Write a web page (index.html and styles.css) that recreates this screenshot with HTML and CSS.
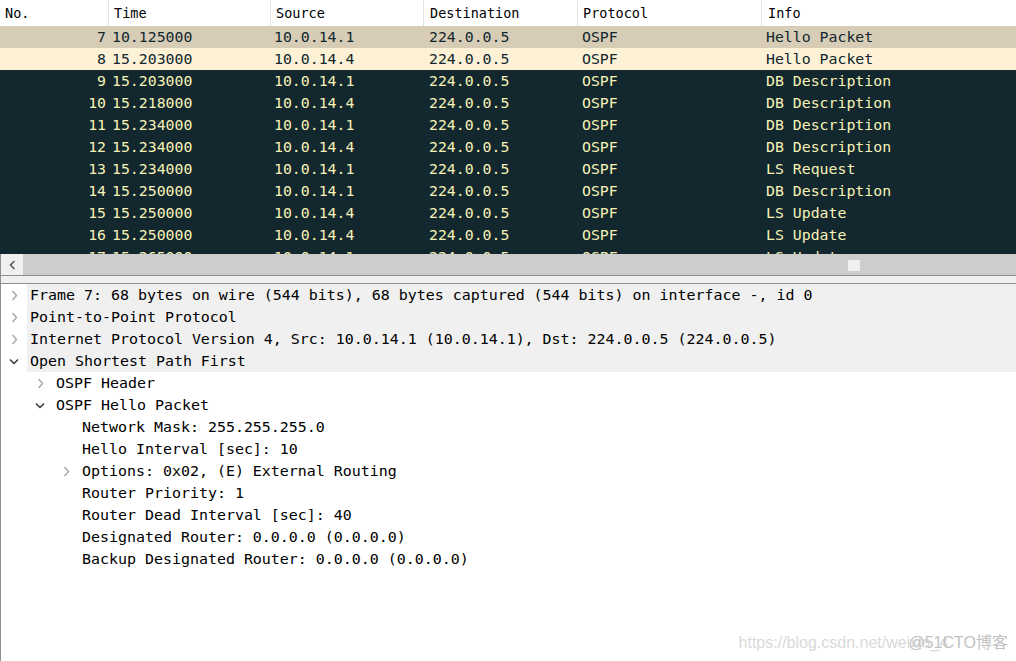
FILE: index.html
```html
<!DOCTYPE html>
<html>
<head>
<meta charset="utf-8">
<link rel="stylesheet" href="styles.css">
</head>
<body>
<div class="app">
  <div class="plist">
    <div class="phead">
      <div class="hc c-no">No.</div>
      <div class="hc">Time</div>
      <div class="hc">Source</div>
      <div class="hc c-dst">Destination</div>
      <div class="hc">Protocol</div>
      <div class="hc c-info">Info</div>
    </div>
    <div class="pbody">
      <div class="prow sel"><span class="c-no">7</span><span class="c-time">10.125000</span><span class="c-src">10.0.14.1</span><span class="c-dst">224.0.0.5</span><span class="c-pr">OSPF</span><span class="c-info">Hello Packet</span></div>
      <div class="prow light"><span class="c-no">8</span><span class="c-time">15.203000</span><span class="c-src">10.0.14.4</span><span class="c-dst">224.0.0.5</span><span class="c-pr">OSPF</span><span class="c-info">Hello Packet</span></div>
      <div class="prow dark"><span class="c-no">9</span><span class="c-time">15.203000</span><span class="c-src">10.0.14.1</span><span class="c-dst">224.0.0.5</span><span class="c-pr">OSPF</span><span class="c-info">DB Description</span></div>
      <div class="prow dark"><span class="c-no">10</span><span class="c-time">15.218000</span><span class="c-src">10.0.14.4</span><span class="c-dst">224.0.0.5</span><span class="c-pr">OSPF</span><span class="c-info">DB Description</span></div>
      <div class="prow dark"><span class="c-no">11</span><span class="c-time">15.234000</span><span class="c-src">10.0.14.1</span><span class="c-dst">224.0.0.5</span><span class="c-pr">OSPF</span><span class="c-info">DB Description</span></div>
      <div class="prow dark"><span class="c-no">12</span><span class="c-time">15.234000</span><span class="c-src">10.0.14.4</span><span class="c-dst">224.0.0.5</span><span class="c-pr">OSPF</span><span class="c-info">DB Description</span></div>
      <div class="prow dark"><span class="c-no">13</span><span class="c-time">15.234000</span><span class="c-src">10.0.14.1</span><span class="c-dst">224.0.0.5</span><span class="c-pr">OSPF</span><span class="c-info">LS Request</span></div>
      <div class="prow dark"><span class="c-no">14</span><span class="c-time">15.250000</span><span class="c-src">10.0.14.1</span><span class="c-dst">224.0.0.5</span><span class="c-pr">OSPF</span><span class="c-info">DB Description</span></div>
      <div class="prow dark"><span class="c-no">15</span><span class="c-time">15.250000</span><span class="c-src">10.0.14.4</span><span class="c-dst">224.0.0.5</span><span class="c-pr">OSPF</span><span class="c-info">LS Update</span></div>
      <div class="prow dark"><span class="c-no">16</span><span class="c-time">15.250000</span><span class="c-src">10.0.14.4</span><span class="c-dst">224.0.0.5</span><span class="c-pr">OSPF</span><span class="c-info">LS Update</span></div>
      <div class="prow dark"><span class="c-no">17</span><span class="c-time">15.265000</span><span class="c-src">10.0.14.1</span><span class="c-dst">224.0.0.5</span><span class="c-pr">OSPF</span><span class="c-info">LS Update</span></div>
    </div>
    <div class="hscroll">
      <div class="sbtn"><svg width="7" height="10" viewBox="0 0 7 10"><path d="M5.5 1 L1.5 5 L5.5 9" fill="none" stroke="#5a5a5a" stroke-width="1.6"/></svg></div>
      <div class="strack"><div class="sthumb"></div></div>
    </div>
  </div>
  <div class="splitter"></div>
  <div class="details">
    <div class="drow top"><span class="arr"><svg width="7" height="11" viewBox="0 0 7 11"><path d="M1.5 1 L5.5 5.5 L1.5 10" fill="none" stroke="#a8a8a8" stroke-width="1.5"/></svg></span><span class="lbl">Frame 7: 68 bytes on wire (544 bits), 68 bytes captured (544 bits) on interface -, id 0</span></div>
    <div class="drow top"><span class="arr"><svg width="7" height="11" viewBox="0 0 7 11"><path d="M1.5 1 L5.5 5.5 L1.5 10" fill="none" stroke="#a8a8a8" stroke-width="1.5"/></svg></span><span class="lbl">Point-to-Point Protocol</span></div>
    <div class="drow top"><span class="arr"><svg width="7" height="11" viewBox="0 0 7 11"><path d="M1.5 1 L5.5 5.5 L1.5 10" fill="none" stroke="#a8a8a8" stroke-width="1.5"/></svg></span><span class="lbl">Internet Protocol Version 4, Src: 10.0.14.1 (10.0.14.1), Dst: 224.0.0.5 (224.0.0.5)</span></div>
    <div class="drow top"><span class="arr"><svg width="10" height="7" viewBox="0 0 10 7"><path d="M1 1.5 L5 5.5 L9 1.5" fill="none" stroke="#333" stroke-width="1.5"/></svg></span><span class="lbl">Open Shortest Path First</span></div>
    <div class="drow l1"><span class="arr"><svg width="7" height="11" viewBox="0 0 7 11"><path d="M1.5 1 L5.5 5.5 L1.5 10" fill="none" stroke="#a8a8a8" stroke-width="1.5"/></svg></span><span class="lbl">OSPF Header</span></div>
    <div class="drow l1"><span class="arr"><svg width="10" height="7" viewBox="0 0 10 7"><path d="M1 1.5 L5 5.5 L9 1.5" fill="none" stroke="#333" stroke-width="1.5"/></svg></span><span class="lbl">OSPF Hello Packet</span></div>
    <div class="drow l2"><span class="arr"></span><span class="lbl">Network Mask: 255.255.255.0</span></div>
    <div class="drow l2"><span class="arr"></span><span class="lbl">Hello Interval [sec]: 10</span></div>
    <div class="drow l2"><span class="arr"><svg width="7" height="11" viewBox="0 0 7 11"><path d="M1.5 1 L5.5 5.5 L1.5 10" fill="none" stroke="#a8a8a8" stroke-width="1.5"/></svg></span><span class="lbl">Options: 0x02, (E) External Routing</span></div>
    <div class="drow l2"><span class="arr"></span><span class="lbl">Router Priority: 1</span></div>
    <div class="drow l2"><span class="arr"></span><span class="lbl">Router Dead Interval [sec]: 40</span></div>
    <div class="drow l2"><span class="arr"></span><span class="lbl">Designated Router: 0.0.0.0 (0.0.0.0)</span></div>
    <div class="drow l2"><span class="arr"></span><span class="lbl">Backup Designated Router: 0.0.0.0 (0.0.0.0)</span></div>
  </div>
  <div class="watermark"><span class="wm-url">https://blog.csdn.net/weixin_4</span><span class="wm-51">@51CTO博客</span></div>
</div>
</body>
</html>
```

FILE: styles.css
```css
html, body {
  margin: 0;
  padding: 0;
  width: 1016px;
  height: 661px;
  overflow: hidden;
  background: #fff;
}

.app {
  position: relative;
  width: 1016px;
  height: 661px;
  display: flex;
  flex-direction: column;
  font-family: "DejaVu Sans Mono", monospace;
}

.plist {
  display: flex;
  flex-direction: column;
}

.phead {
  display: grid;
  grid-template-columns: 108px 162px 153px 154px 184px 1fr;
  height: 26px;
  background: #fff;
  font-size: 13.5px;
  color: #000;
}

.hc {
  display: flex;
  align-items: center;
  padding-left: 5px;
  border-left: 1px solid #e4e4e4;
  padding-bottom: 1px;
}

.hc.c-no {
  border-left: none;
  padding-left: 5px;
}

.hc.c-dst,
.hc.c-info {
  padding-left: 6px;
}

.pbody {
  height: 228px;
  overflow: hidden;
}

.prow {
  display: grid;
  grid-template-columns: 108px 162px 153px 154px 184px 1fr;
  height: 22px;
  align-items: center;
  font-size: 14.85px;
  white-space: pre;
}

.prow span {
  padding-left: 5px;
}

.prow span.c-time,
.prow span.c-src {
  padding-left: 4px;
}

.prow span.c-dst {
  padding-left: 6px;
}

.prow span.c-pr,
.prow span.c-info {
  padding-left: 5px;
}

.prow span.c-no {
  text-align: right;
  padding-left: 0;
  padding-right: 2px;
}

.prow.sel {
  background: #d7cdb6;
  color: #12272e;
}

.prow.light {
  background: #fdf2d5;
  color: #12272e;
}

.prow.dark {
  background: #12272e;
  color: #f6f2b6;
}

.hscroll {
  display: flex;
  height: 21px;
  border-left: 1px solid #8e8e95;
  border-bottom: 1px solid #8e8e95;
}

.sbtn {
  width: 22px;
  background: #f0f0f0;
  display: flex;
  align-items: center;
  justify-content: center;
}

.strack {
  flex: 1;
  background: #cdcdcd;
  position: relative;
}

.sthumb {
  position: absolute;
  left: 825px;
  top: 6px;
  width: 12px;
  height: 11px;
  background: #f0f0f0;
}

.splitter {
  height: 7px;
  background: #f0f0f0;
  border-left: 1px solid #8e8e95;
  border-bottom: 1px solid #8e8e95;
}

.details {
  flex: 1;
  border-left: 1px solid #8e8e95;
  background: #fff;
  font-size: 14.95px;
  color: #000;
}

.drow {
  display: flex;
  height: 22px;
  align-items: center;
  white-space: pre;
}

.drow.l1 {
  padding-left: 26px;
}

.drow.l2 {
  padding-left: 52px;
}

.arr {
  width: 26px;
  height: 22px;
  display: flex;
  align-items: center;
  justify-content: center;
  flex: none;
}

.lbl {
  height: 22px;
  line-height: 22px;
  padding-left: 3px;
}

.drow.top .lbl {
  flex: 1;
  background: #f0f0f0;
}

.watermark {
  position: absolute;
  right: 8px;
  bottom: 8px;
  font-family: "Liberation Sans", "Noto Sans CJK SC", sans-serif;
  white-space: nowrap;
}

.wm-url {
  color: #dadada;
  font-size: 16px;
  margin-right: -40px;
}

.wm-51 {
  color: #c2c2c2;
  font-size: 16px;
}
```
